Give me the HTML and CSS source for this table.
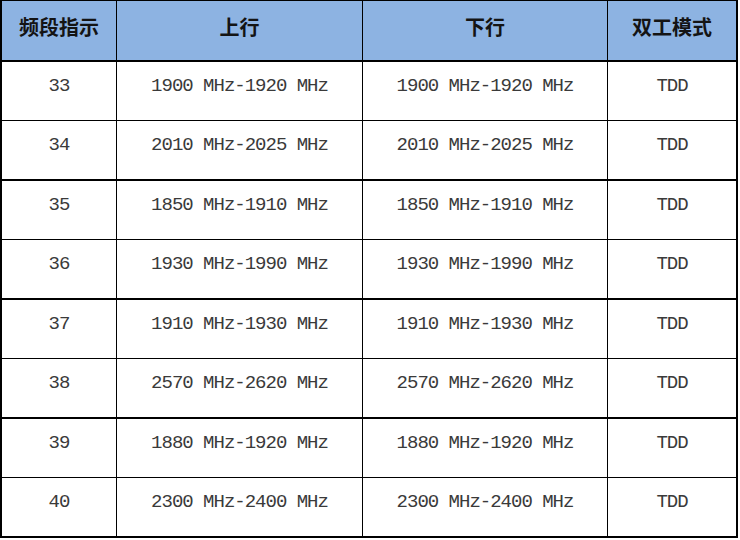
FILE: index.html
```html
<!DOCTYPE html>
<html lang="zh-CN">
<head>
<meta charset="utf-8">
<title>频段指示</title>
<link rel="stylesheet" href="styles.css">
</head>
<body>
<table class="bands">
  <thead>
    <tr>
      <th class="c-band">频段指示</th>
      <th class="c-up">上行</th>
      <th class="c-down">下行</th>
      <th class="c-mode">双工模式</th>
    </tr>
  </thead>
  <tbody>
    <tr><td>33</td><td>1900 MHz-1920 MHz</td><td>1900 MHz-1920 MHz</td><td>TDD</td></tr>
    <tr><td>34</td><td>2010 MHz-2025 MHz</td><td>2010 MHz-2025 MHz</td><td>TDD</td></tr>
    <tr><td>35</td><td>1850 MHz-1910 MHz</td><td>1850 MHz-1910 MHz</td><td>TDD</td></tr>
    <tr><td>36</td><td>1930 MHz-1990 MHz</td><td>1930 MHz-1990 MHz</td><td>TDD</td></tr>
    <tr><td>37</td><td>1910 MHz-1930 MHz</td><td>1910 MHz-1930 MHz</td><td>TDD</td></tr>
    <tr><td>38</td><td>2570 MHz-2620 MHz</td><td>2570 MHz-2620 MHz</td><td>TDD</td></tr>
    <tr><td>39</td><td>1880 MHz-1920 MHz</td><td>1880 MHz-1920 MHz</td><td>TDD</td></tr>
    <tr><td>40</td><td>2300 MHz-2400 MHz</td><td>2300 MHz-2400 MHz</td><td>TDD</td></tr>
  </tbody>
</table>
</body>
</html>
```

FILE: styles.css
```css
html, body {
  margin: 0;
  padding: 0;
  background: #ffffff;
}

.bands {
  border-collapse: separate;
  border-spacing: 0;
  table-layout: fixed;
  width: 738px;
  border-left: 2px solid #000;
  border-top: 1px solid #000;
}

.bands th,
.bands td {
  box-sizing: border-box;
  padding: 0;
  text-align: center;
  vertical-align: top;
  border-right: 1px solid #000;
  border-bottom: 1px solid #000;
}

.bands th:last-child,
.bands td:last-child {
  border-right-width: 2px;
}

.c-band { width: 115px; }
.c-up { width: 246px; }
.c-down { width: 245px; }
.c-mode { width: 130px; }

.bands th {
  height: 61px;
  padding-top: 13px;
  background: #8db3e2;
  border-bottom-width: 2px;
  color: #141414;
  font: bold 20px/26px "Noto Sans CJK SC", sans-serif;
}

.bands td {
  height: 59px;
  padding-top: 12px;
  color: #3a3a3a;
  font: 19px/24px "Liberation Mono", monospace;
  letter-spacing: -1px;
}

.bands tbody tr:nth-child(even) td {
  height: 60px;
  border-bottom-width: 2px;
}
```
